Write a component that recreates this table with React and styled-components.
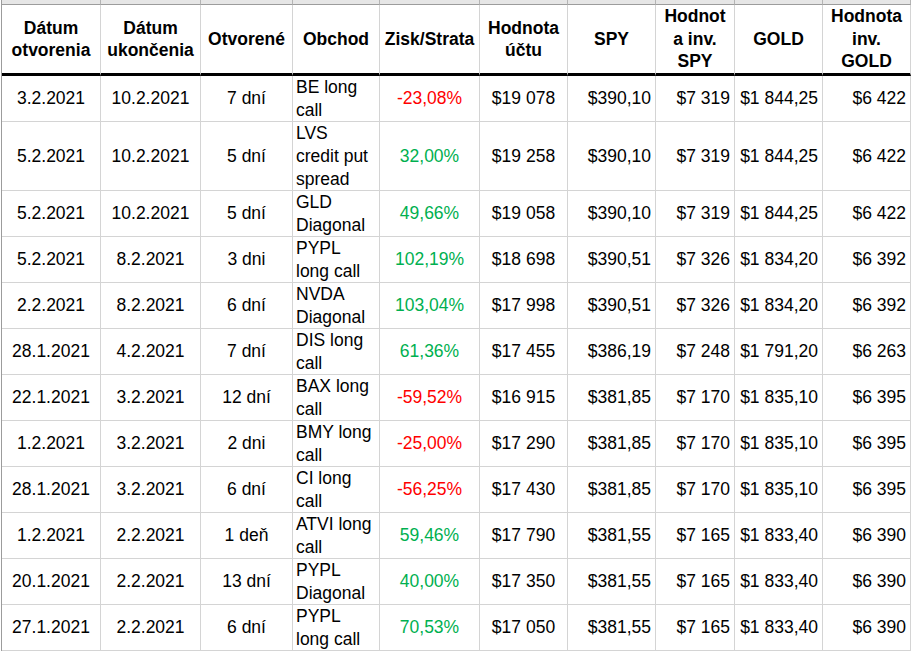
import React from "react";
import styled, { createGlobalStyle } from "styled-components";

const GlobalStyle = createGlobalStyle`
  html, body {
    margin: 0;
    padding: 0;
    background: #ffffff;
  }
  body {
    font-family: "Liberation Sans", Arial, sans-serif;
    color: #000000;
  }
`;

const WIDTHS = [99, 100, 92, 87, 100, 88, 88, 79, 88, 88];
const ALIGN = ["center", "center", "center", "left", "center", "center", "right", "right", "right", "right"];

const HEADERS = [
  "Dátum\notvorenia",
  "Dátum\nukončenia",
  "Otvorené",
  "Obchod",
  "Zisk/Strata",
  "Hodnota\núčtu",
  "SPY",
  "Hodnot\na inv.\nSPY",
  "GOLD",
  "Hodnota\ninv.\nGOLD",
];

const nb = (s) => s.replace(/ /g, "\u00a0");

const ROWS = [
  ["3.2.2021", "10.2.2021", "7 dní", "BE long\ncall", "-23,08%", "$19 078", "$390,10", "$7 319", "$1 844,25", "$6 422"],
  ["5.2.2021", "10.2.2021", "5 dní", "LVS\ncredit put\nspread", "32,00%", "$19 258", "$390,10", "$7 319", "$1 844,25", "$6 422"],
  ["5.2.2021", "10.2.2021", "5 dní", "GLD\nDiagonal", "49,66%", "$19 058", "$390,10", "$7 319", "$1 844,25", "$6 422"],
  ["5.2.2021", "8.2.2021", "3 dni", "PYPL\nlong call", "102,19%", "$18 698", "$390,51", "$7 326", "$1 834,20", "$6 392"],
  ["2.2.2021", "8.2.2021", "6 dní", "NVDA\nDiagonal", "103,04%", "$17 998", "$390,51", "$7 326", "$1 834,20", "$6 392"],
  ["28.1.2021", "4.2.2021", "7 dní", "DIS long\ncall", "61,36%", "$17 455", "$386,19", "$7 248", "$1 791,20", "$6 263"],
  ["22.1.2021", "3.2.2021", "12 dní", "BAX long\ncall", "-59,52%", "$16 915", "$381,85", "$7 170", "$1 835,10", "$6 395"],
  ["1.2.2021", "3.2.2021", "2 dni", "BMY long\ncall", "-25,00%", "$17 290", "$381,85", "$7 170", "$1 835,10", "$6 395"],
  ["28.1.2021", "3.2.2021", "6 dní", "CI long\ncall", "-56,25%", "$17 430", "$381,85", "$7 170", "$1 835,10", "$6 395"],
  ["1.2.2021", "2.2.2021", "1 deň", "ATVI long\ncall", "59,46%", "$17 790", "$381,55", "$7 165", "$1 833,40", "$6 390"],
  ["20.1.2021", "2.2.2021", "13 dní", "PYPL\nDiagonal", "40,00%", "$17 350", "$381,55", "$7 165", "$1 833,40", "$6 390"],
  ["27.1.2021", "2.2.2021", "6 dní", "PYPL\nlong call", "70,53%", "$17 050", "$381,55", "$7 165", "$1 833,40", "$6 390"],
];

const Sheet = styled.div`
  display: grid;
  grid-template-columns: ${WIDTHS.map((w) => `${w}px`).join(" ")};
  margin-left: 1px;
  border-left: 1px solid #9c9c9c;
  font-size: 17.5px;
`;

const StripCell = styled.div`
  box-sizing: border-box;
  height: 5px;
  background: #e6e6e6;
  border-right: 1px solid #b4b4b4;
  border-bottom: 1px solid #9c9c9c;
`;

const HeadCell = styled.div`
  box-sizing: border-box;
  height: 71px;
  display: flex;
  align-items: center;
  justify-content: center;
  text-align: center;
  font-weight: bold;
  line-height: 22.5px;
  white-space: pre-line;
  border-right: 1px solid #d4d4d4;
  border-bottom: 3px solid #000000;
`;

const Cell = styled.div`
  box-sizing: border-box;
  height: ${(p) => (p.$tall ? 69 : 46)}px;
  display: flex;
  align-items: center;
  justify-content: ${(p) =>
    p.$align === "left" ? "flex-start" : p.$align === "right" ? "flex-end" : "center"};
  text-align: ${(p) => p.$align};
  padding: 0 ${(p) => (p.$align === "right" ? 4 : 2)}px 0 ${(p) => (p.$align === "left" ? 3 : 2)}px;
  line-height: 23px;
  white-space: pre-line;
  color: ${(p) => p.$tone || "#000000"};
  border-right: 1px solid #d4d4d4;
  border-bottom: 1px solid #d4d4d4;
`;

const toneOf = (value) => (value.startsWith("-") ? "#ff0000" : "#00b050");

export default function App() {
  return (
    <>
      <GlobalStyle />
      <Sheet>
        {WIDTHS.map((_, i) => (
          <StripCell key={`s${i}`} />
        ))}
        {HEADERS.map((h) => (
          <HeadCell key={h}>{h}</HeadCell>
        ))}
        {ROWS.map((row, r) =>
          row.map((value, c) => (
            <Cell
              key={`${r}-${c}`}
              $align={ALIGN[c]}
              $tall={row[3].split("\n").length > 2}
              $tone={c === 4 ? toneOf(value) : undefined}
            >
              {c === 3 ? value : nb(value)}
            </Cell>
          ))
        )}
      </Sheet>
    </>
  );
}
